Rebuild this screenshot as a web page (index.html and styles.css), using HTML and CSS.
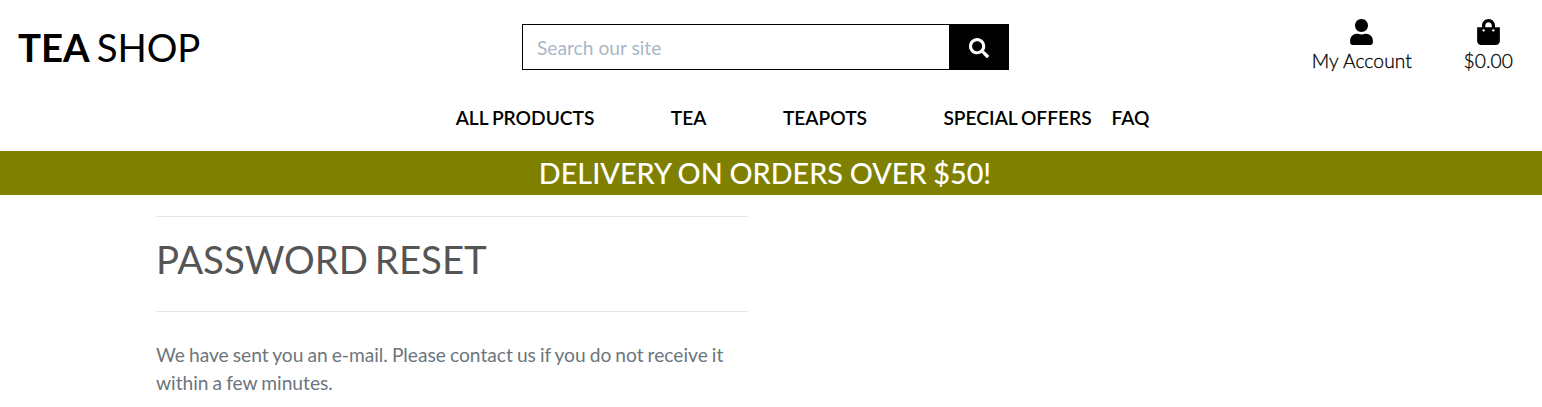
FILE: index.html
```html
<!DOCTYPE html>
<html lang="en">
<head>
<meta charset="utf-8">
<title>Tea Shop</title>
<link rel="stylesheet" href="styles.css">
</head>
<body>
<header class="header">
  <a class="logo"><strong>TEA</strong> SHOP</a>
  <form class="search">
    <input class="search-input" type="text" placeholder="Search our site">
    <button class="search-button" type="button" aria-label="Search"><svg viewBox="0 0 512 512" width="20" height="20"><path fill="currentColor" d="M505 442.700L405.300 343c-4.500-4.500-10.600-7-17-7H372c27.600-35.300 44-79.700 44-128C416 93.100 322.900 0 208 0S0 93.100 0 208s93.100 208 208 208c48.300 0 92.700-16.400 128-44v16.300c0 6.400 2.500 12.500 7 17l99.700 99.700c9.400 9.400 24.600 9.400 33.900 0l28.300-28.300c9.400-9.400 9.400-24.600.1-34zM208 336c-70.700 0-128-57.200-128-128 0-70.700 57.200-128 128-128 70.700 0 128 57.200 128 128 0 70.700-57.200 128-128 128z"/></svg></button>
  </form>
  <div class="tools">
    <a class="tool"><svg viewBox="0 0 448 512" width="23" height="26"><path fill="currentColor" d="M224 256c70.700 0 128-57.300 128-128S294.700 0 224 0 96 57.300 96 128s57.300 128 128 128zm89.600 32h-16.700c-22.200 10.200-46.900 16-72.900 16s-50.600-5.800-72.900-16h-16.700C60.200 288 0 348.200 0 422.400V464c0 26.500 21.500 48 48 48h352c26.500 0 48-21.500 48-48v-41.600c0-74.200-60.200-134.400-134.400-134.400z"/></svg><span>My Account</span></a>
    <a class="tool"><svg viewBox="0 0 448 512" width="23" height="26"><path fill="currentColor" d="M352 160v-32C352 57.420 294.579 0 224 0 153.420 0 96 57.420 96 128v32H0v272c0 44.183 35.817 80 80 80h288c44.183 0 80-35.817 80-80V160h-96zm-192-32c0-35.290 28.710-64 64-64s64 28.710 64 64v32H160v-32zm160 120c-13.255 0-24-10.745-24-24s10.745-24 24-24 24 10.745 24 24-10.745 24-24 24zm-192 0c-13.255 0-24-10.745-24-24s10.745-24 24-24 24 10.745 24 24-10.745 24-24 24z"/></svg><span>$0.00</span></a>
  </div>
</header>
<nav class="nav">
  <a class="nav-wide">ALL PRODUCTS</a>
  <a class="nav-wide">TEA</a>
  <a class="nav-wide">TEAPOTS</a>
  <a class="nav-last">SPECIAL OFFERS</a>
  <a>FAQ</a>
</nav>
<div class="banner"><h4>DELIVERY ON ORDERS OVER $50!</h4></div>
<main class="content">
  <h2 class="title">PASSWORD RESET</h2>
  <p class="message">We have sent you an e-mail. Please contact us if you do not receive it within a few minutes.</p>
</main>
</body>
</html>
```
FILE: styles.css
```css
* { box-sizing: border-box; }
body {
  margin: 0;
  background: #fff;
  color: #000;
  font: 400 19.2px/28.8px Lato, sans-serif;
  overflow: hidden;
}
.header {
  display: grid;
  grid-template-columns: 504px 487px 1fr;
  height: 94px;
  padding: 0 29px 0 18px;
}
.logo { padding-top: 24px; font-size: 38.4px; line-height: 46px; white-space: nowrap; word-spacing: -2.5px; letter-spacing: -0.1px; }
.logo strong { font-weight: 700; }
.search { display: flex; height: 46px; margin-top: 24px; }
.search-input {
  flex: 1;
  min-width: 0;
  padding: 2px 14px 0;
  border: 1px solid #000;
  border-right: 0;
  border-radius: 0;
  font: inherit;
}
.search-input::placeholder { color: #aab7c4; opacity: 1; }
.search-button {
  display: flex;
  align-items: center;
  justify-content: center;
  width: 60px;
  padding: 2px 0 0;
  border: 0;
  background: #000;
  color: #fff;
}
.tools { display: flex; justify-content: flex-end; gap: 51.5px; padding-top: 19px; font-weight: 300; }
.tool { display: flex; flex-direction: column; align-items: center; }
.tool span { line-height: 32px; letter-spacing: 0.1px; -webkit-text-stroke: 0.3px #000; }
.nav {
  display: flex;
  height: 57px;
  padding: 10px 0 0 455.7px;
  font-weight: 600;
  word-spacing: -1px;
}
.nav-wide { margin-right: 76.4px; }
.nav-last { margin-right: 19.8px; }
.banner { height: 44px; padding-right: 12px; background: olive; color: #fff; text-align: center; }
.banner h4 { margin: 0; font-size: 28.8px; font-weight: 500; line-height: 44px; word-spacing: -0.6px; }
.content { width: 592px; margin: 21px 0 0 156px; }
.title {
  height: 96px;
  margin: 0;
  border: solid #e5e5e5;
  border-width: 1px 0;
  color: #555;
  font-size: 38.4px;
  font-weight: 400;
  line-height: 84px;
  word-spacing: -3px;
}
.message { margin: 29px 0 0; color: #6c757d; line-height: 28px; word-spacing: -0.9px; }
```
